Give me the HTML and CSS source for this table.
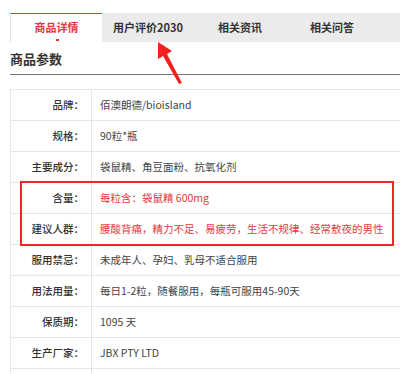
FILE: index.html
```html
<!DOCTYPE html>
<html lang="zh">
<head>
<meta charset="utf-8">
<link rel="stylesheet" href="styles.css">
</head>
<body>
<div class="page">
  <div class="tabs">
    <div class="tab active">商品详情<span class="dot"></span></div>
    <div class="tab">用户评价2030</div>
    <div class="tab">相关资讯</div>
    <div class="tab">相关问答</div>
  </div>
  <h2 class="title">商品参数</h2>
  <div class="table">
    <div class="row"><div class="label">品牌：</div><div class="value">佰澳朗德/bioisland</div></div>
    <div class="row"><div class="label">规格：</div><div class="value">90粒*瓶</div></div>
    <div class="row"><div class="label">主要成分：</div><div class="value">袋鼠精、角豆面粉、抗氧化剂</div></div>
    <div class="highlight">
      <div class="row"><div class="label">含量：</div><div class="value red">每粒含：袋鼠精 600mg</div></div>
      <div class="row"><div class="label">建议人群：</div><div class="value red">腰酸背痛，精力不足、易疲劳，生活不规律、经常敖夜的男性</div></div>
    </div>
    <div class="row"><div class="label">服用禁忌：</div><div class="value">未成年人、孕妇、乳母不适合服用</div></div>
    <div class="row"><div class="label">用法用量：</div><div class="value">每日1-2粒，随餐服用，每瓶可服用45-90天</div></div>
    <div class="row"><div class="label">保质期：</div><div class="value">1095 天</div></div>
    <div class="row"><div class="label">生产厂家：</div><div class="value">JBX PTY LTD</div></div>
    <div class="row last"><div class="label"></div><div class="value"></div></div>
  </div>
  <svg class="arrow" width="44" height="46" viewBox="0 0 44 46">
    <polygon points="18,2 32,11 27,14 42,43 39,44 23,16 18,19" fill="#f0201e"/>
  </svg>
</div>
</body>
</html>
```
FILE: styles.css
```css
* { box-sizing: border-box; }
html, body { margin: 0; padding: 0; background: #fff; }
body {
  font-family: "Noto Sans CJK SC", "Noto Sans", sans-serif;
  color: #333;
  width: 400px;
  height: 374px;
  overflow: hidden;
}
.page {
  position: relative;
  padding: 13px 0 0 10px;
}
.tabs {
  display: flex;
  height: 29px;
  background: #ebebeb;
}
.tab {
  position: relative;
  width: 92px;
  flex: none;
  text-align: center;
  font-size: 11px;
  font-weight: bold;
  line-height: 29px;
  color: #333;
}
.tab.active {
  background: #fff;
  color: #e4393c;
  border-top: 1px solid #e4393c;
  border-left: 1px solid #e2e2e2;
  line-height: 27px;
}
.dot {
  position: absolute;
  left: 45px;
  bottom: 1px;
  width: 3px;
  height: 2px;
  background: #e4393c;
}
.title {
  margin: 0;
  height: 33px;
  padding-top: 9px;
  font-size: 13px;
  line-height: 16px;
  font-weight: bold;
  color: #333;
  border-bottom: 1px solid #777;
}
.table {
  margin-top: 14px;
  border-left: 1px solid #e6e6e6;
  border-top: 1px solid #e6e6e6;
}
.row {
  display: flex;
  height: 31px;
  border-bottom: 1px solid #e6e6e6;
  font-size: 10.5px;
  line-height: 30px;
}
.row.last { height: 5px; border-bottom: 0; }
.label {
  width: 81px;
  flex: none;
  text-align: right;
  padding-right: 7px;
  border-right: 1px solid #e6e6e6;
  color: #333;
  font-weight: 500;
  white-space: nowrap;
}
.value {
  padding-left: 8px;
  white-space: nowrap;
  color: #444;
}
.value.red { color: #e4393c; }
.highlight {
  position: relative;
}
.highlight::after {
  content: "";
  position: absolute;
  left: 9px;
  right: 6px;
  top: -2px;
  bottom: -1px;
  border: 2px solid #f0262a;
}
.arrow {
  position: absolute;
  left: 140px;
  top: 40px;
}
```
